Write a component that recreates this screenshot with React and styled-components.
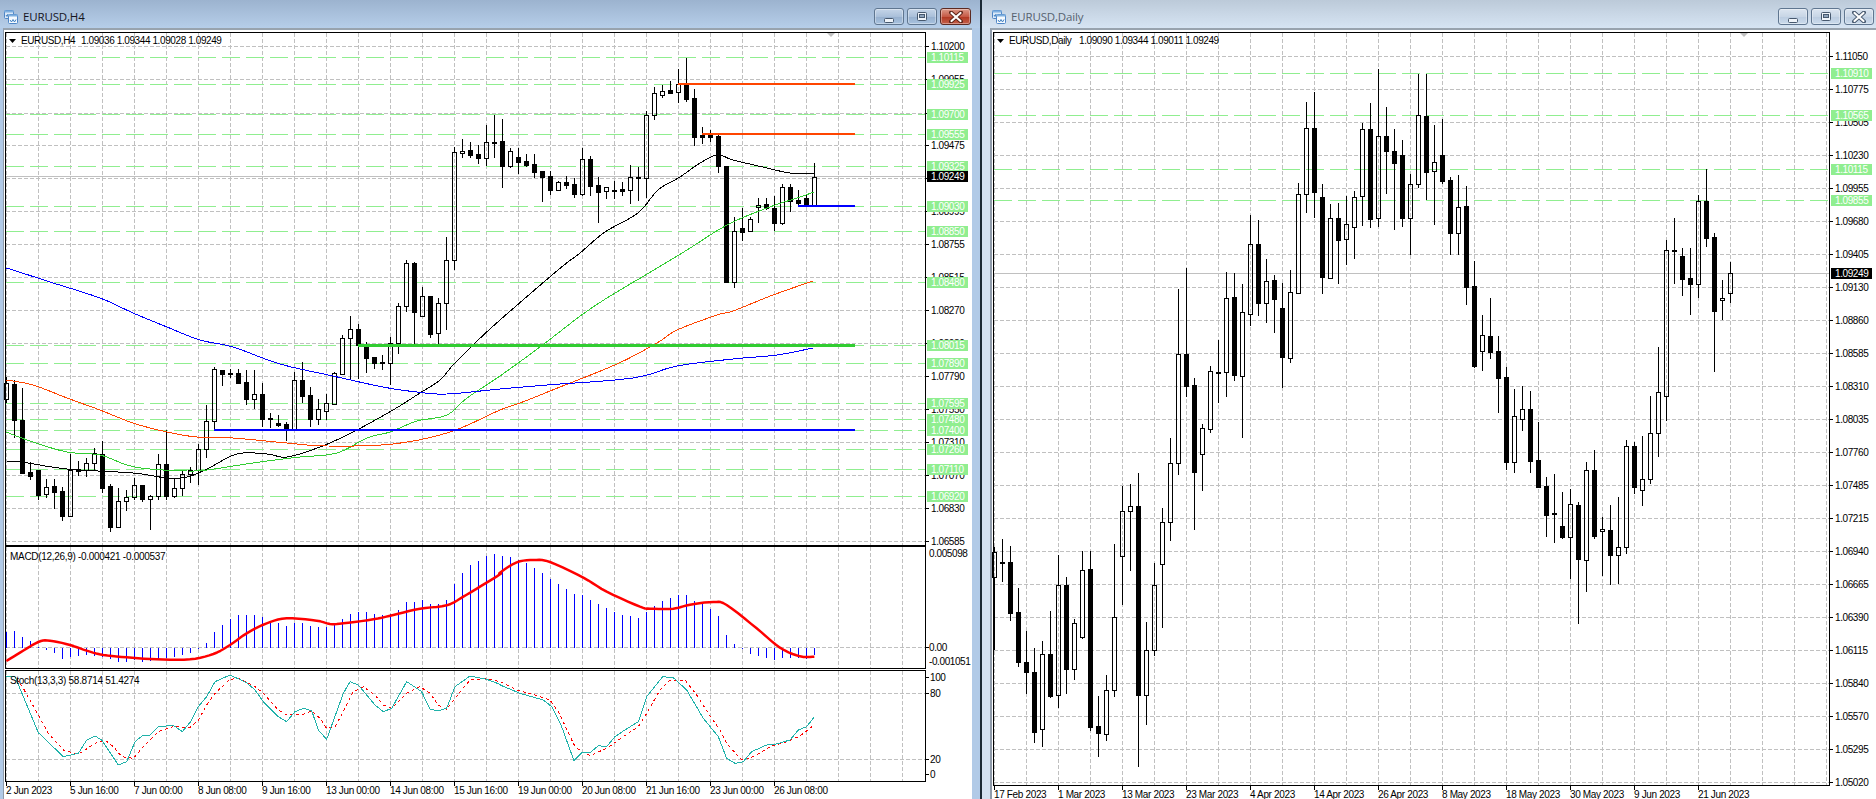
import React from "react";
import styled, { createGlobalStyle } from "styled-components";

const Global = createGlobalStyle`
  html, body { margin: 0; padding: 0; background: #1c2a35; }
  #root { width: 1876px; height: 799px; overflow: hidden; }
`;

/* ---------- data: [high, low, bodyTop, bodyBottom, isWhite] in chart pixels ---------- */
const H4 = [
[377,403,383,399,1],[380,438,384,420,0],[388,473,420,473,0],[462,480,472,476,0],[470,500,470,495,0],[479,498,487,494,1],[479,509,486,492,0],[487,521,491,516,0],[454,516,470,516,1],[461,476,469,471,0],
[458,477,463,470,1],[448,470,453,463,1],[441,493,454,488,0],[484,532,486,527,0],[488,528,501,527,1],[490,511,497,501,1],[478,500,485,497,1],[485,502,485,499,0],[495,530,496,499,1],[454,500,464,496,1],
[430,500,464,496,0],[478,498,488,496,1],[471,496,474,488,1],[467,483,470,474,1],[444,485,449,470,1],[405,458,421,449,1],[367,429,369,421,1],[370,386,370,374,0],[369,378,373,374,0],[369,383,373,383,0],
[370,405,382,399,0],[370,409,394,399,1],[383,427,394,419,0],[413,428,418,419,0],[415,427,423,425,0],[422,441,424,430,0],[372,430,380,430,1],[362,403,380,396,0],[387,427,395,419,0],[399,425,409,419,1],
[394,420,403,411,1],[372,404,373,404,1],[335,375,338,374,1],[316,380,329,338,1],[324,379,329,345,0],[342,373,345,358,0],[357,369,357,363,0],[355,370,362,363,0],[337,385,343,363,1],[303,354,306,343,1],
[260,312,263,306,1],[262,347,263,312,0],[287,317,296,316,1],[296,338,296,334,0],[298,345,303,333,1],[237,330,260,303,1],[147,270,152,260,1],[139,158,151,153,1],[142,158,150,155,0],[145,164,154,158,0],
[125,166,142,158,1],[115,158,142,143,0],[119,188,141,166,0],[148,168,151,166,1],[148,174,157,162,0],[154,167,161,165,0],[154,178,164,172,0],[171,202,171,177,0],[171,195,176,190,0],[181,191,182,190,1],
[176,189,182,185,0],[178,198,184,194,0],[148,196,159,194,1],[156,196,159,186,0],[177,223,185,192,0],[187,199,187,191,1],[181,199,190,191,0],[182,196,189,191,0],[165,204,177,190,1],[167,201,177,178,0],
[111,198,115,178,1],[87,120,93,115,1],[85,98,91,95,1],[81,94,90,93,0],[69,103,84,92,1],[58,102,84,99,0],[89,146,98,137,0],[127,144,135,137,0],[130,142,135,137,0],[135,173,136,166,0],
[166,282,166,282,0],[217,288,231,282,1],[208,241,228,232,0],[217,232,219,231,1],[198,223,205,207,1],[198,210,204,208,0],[196,231,208,223,0],[184,225,187,223,1],[184,212,187,201,0],[190,206,200,203,0],
[195,207,198,206,0],[163,207,177,206,1]];

const D1 = [
[547,650,552,577,1],[539,582,562,563,0],[546,621,562,613,0],[588,667,612,662,0],[631,694,662,672,0],[648,743,672,732,0],[641,747,654,729,1],[611,698,654,696,0],[555,708,585,695,1],[577,694,585,669,0],
[619,680,623,669,1],[551,639,570,637,1],[551,731,569,727,0],[696,757,726,733,0],[675,741,690,734,1],[544,697,617,690,1],[486,605,511,556,1],[484,571,506,511,1],[473,767,506,695,0],[622,725,650,695,1],
[563,656,585,650,1],[508,628,522,564,1],[438,541,463,522,1],[289,475,354,463,1],[268,397,354,386,0],[378,530,385,472,0],[424,491,428,454,1],[366,433,371,429,1],[340,403,372,373,0],[272,397,298,372,1],
[273,381,297,375,0],[284,438,312,376,1],[215,326,244,314,1],[220,316,244,303,0],[259,323,281,303,1],[275,333,280,299,0],[283,388,308,357,0],[270,363,292,358,1],[183,294,194,293,1],[102,213,128,194,1],
[92,218,128,192,0],[184,294,197,277,0],[204,279,218,278,1],[203,284,218,240,0],[196,265,224,239,1],[191,259,197,227,1],[123,226,129,196,1],[103,228,129,219,0],[69,227,136,218,1],[107,194,136,151,0],
[129,230,151,163,0],[140,227,155,218,0],[174,255,184,218,1],[74,188,115,184,1],[74,200,116,172,0],[125,225,162,171,1],[119,184,155,181,0],[177,255,180,233,0],[175,255,207,233,1],[186,305,206,287,0],
[261,368,286,366,0],[315,371,335,351,1],[298,359,336,352,0],[336,413,351,378,0],[367,470,377,462,0],[389,473,416,462,1],[386,431,409,419,1],[391,473,409,461,0],[422,488,460,487,0],[477,537,486,515,0],
[474,543,513,514,0],[492,539,526,537,0],[489,579,504,537,1],[502,624,505,559,0],[462,592,470,560,1],[450,539,470,536,0],[517,576,529,531,1],[505,585,530,555,0],[497,584,547,555,1],[440,554,446,547,1],
[442,494,446,487,0],[436,506,479,490,1],[396,484,433,479,1],[347,457,392,433,1],[240,421,250,396,1],[218,284,250,251,0],[248,296,256,279,0],[248,315,278,284,0],[195,298,201,284,1],[169,247,201,238,0],
[233,372,237,311,0],[280,320,298,300,1],[262,303,273,293,1]];

const MA_BLACK = [[6,461],[22,462],[67,469],[133,473],[167,478],[187,477],[207,469],[237,454],[267,454],[287,457],[320,447],[353,432],[393,410],[420,393],[440,380],[453,365],[473,345],[500,320],[558,270],[580,253],[605,232],[638,213],[658,190],[680,177],[697,165],[717,155],[733,160],[767,168],[790,173],[814,174]];
const MA_GREEN = [[6,432],[33,442],[67,452],[100,455],[127,465],[150,469],[187,471],[207,470],[233,466],[267,461],[300,457],[337,453],[367,438],[390,432],[417,421],[447,415],[467,398],[500,376],[540,347],[593,307],[654,270],[687,250],[727,225],[767,208],[800,197],[814,192]];
const MA_ORANGE = [[6,380],[33,385],[67,398],[100,410],[133,423],[167,432],[197,437],[233,438],[287,443],[327,446],[393,444],[450,432],[500,410],[520,403],[560,387],[617,364],[657,343],[677,330],[717,315],[733,311],[773,295],[813,281]];
const MA_BLUE = [[6,268],[13,270],[50,282],[100,298],[133,313],[167,327],[200,340],[233,347],[280,364],[333,376],[383,387],[417,392],[447,394],[500,389],[547,385],[633,378],[677,366],[733,359],[777,355],[813,348]];

const HIST = [305,303,321,333,350,360,368,387,380,378,375,378,380,388,395,395,390,395,392,388,385,382,376,368,357,339,305,285,267,255,255,255,261,275,278,288,279,279,288,290,291,285,267,252,246,246,252,255,253,240,216,216,210,222,222,210,162,129,105,93,77,73,78,81,90,99,114,129,147,162,177,192,195,210,222,234,246,255,258,264,246,228,213,204,195,195,213,219,237,258,315,342,358,372,378,384,390,384,384,384,387,376];

/* Catmull-Rom resampling, so the averages read as curves rather than as chords */
const smooth = (arr, steps = 5) => {
  const out = [];
  for (let i = 0; i < arr.length - 1; i++) {
    const p0 = arr[Math.max(0, i - 1)];
    const p1 = arr[i];
    const p2 = arr[i + 1];
    const p3 = arr[Math.min(arr.length - 1, i + 2)];
    for (let s = 0; s < steps; s++) {
      const t = s / steps;
      const f = k =>
        0.5 *
        (2 * p1[k] +
          (p2[k] - p0[k]) * t +
          (2 * p0[k] - 5 * p1[k] + 4 * p2[k] - p3[k]) * t * t +
          (3 * p1[k] - p0[k] - 3 * p2[k] + p3[k]) * t * t * t);
      out.push([+f(0).toFixed(2), +f(1).toFixed(2)]);
    }
  }
  out.push(arr[arr.length - 1]);
  return out;
};

const fromZoom = (left, right) => [
  ...left.map(([x, y]) => [x / 3, 530 + y / 3]),
  ...right.map(([x, y]) => [500 + x / 3, 530 + y / 3]),
];
const MACD_SIGNAL = fromZoom(
  [[19,393],[60,368],[115,336],[150,332],[210,345],[260,362],[310,375],[380,382],[470,388],[570,388],[640,372],[690,345],[740,310],[800,280],[860,265],[950,272],[990,282],[1030,280],[1120,268],[1180,255],[1260,236],[1340,226],[1390,200],[1440,170],[1500,133]],
  [[0,128],[50,97],[100,90],[150,96],[250,143],[320,185],[420,230],[450,236],[520,236],[570,224],[640,216],[680,225],[770,295],[840,353],[900,379],[943,380]]
);
const STOCH_MAIN = fromZoom(
  [[19,440],[45,440],[115,608],[190,680],[235,670],[260,630],[285,618],[305,630],[355,705],[380,695],[405,635],[430,615],[450,615],[475,590],[520,586],[547,605],[572,575],[595,530],[620,500],[645,455],[690,435],[740,458],[765,480],[790,515],[835,560],[860,575],[885,545],[910,535],[935,542],[955,600],[980,628],[1030,490],[1050,455],[1075,465],[1125,525],[1150,545],[1175,535],[1220,455],[1265,485],[1290,538],[1315,542],[1340,535],[1365,470],[1410,438],[1460,448],[1500,463]],
  [[0,465],[60,490],[130,510],[155,530],[185,590],[222,692],[245,668],[270,668],[295,647],[320,650],[345,620],[370,603],[415,575],[440,500],[488,440],[520,443],[560,480],[610,565],[655,620],[680,685],[705,700],[730,695],[755,665],[800,645],[825,643],[870,630],[895,600],[920,590],[942,562]]
);
const STOCH_SIGNAL = fromZoom(
  [[19,440],[45,440],[67,470],[115,555],[145,610],[190,660],[235,673],[285,640],[315,630],[340,650],[365,680],[400,685],[430,650],[475,605],[520,590],[570,592],[595,570],[620,525],[645,490],[690,448],[715,445],[765,470],[790,490],[835,540],[860,555],[910,553],[935,542],[960,565],[980,595],[1005,590],[1030,545],[1060,485],[1090,470],[1125,495],[1150,525],[1175,535],[1220,490],[1260,470],[1290,490],[1315,525],[1340,538],[1365,505],[1410,450],[1460,445],[1500,455]],
  [[0,455],[50,480],[105,495],[150,510],[175,545],[225,650],[245,665],[270,677],[320,655],[370,620],[415,590],[440,550],[480,480],[510,450],[555,450],[590,495],[625,550],[660,600],[680,640],[725,690],[760,680],[810,650],[860,635],[900,618],[942,585]]
);

const H4_TICKS = [["1.10200",46],["1.09955",79],["1.09700",113],["1.09475",145],["1.09235",178],["1.08995",211],["1.08755",244],["1.08515",277],["1.08270",310],["1.08030",343],["1.07790",376],["1.07550",409],["1.07310",442],["1.07070",475],["1.06830",508],["1.06585",541]];
const H4_LEVELS = [["1.10115",57],["1.09925",84],["1.09700",114],["1.09555",134],["1.09325",166],["1.09030",206],["1.08850",231],["1.08480",282],["1.08015",345],["1.07890",363],["1.07595",403],["1.07480",419],["1.07400",430],["1.07260",449],["1.07110",469],["1.06920",496]];
const D1_TICKS = [["1.11050",56],["1.10775",89],["1.10505",122],["1.10230",155],["1.09955",188],["1.09680",221],["1.09405",254],["1.09130",287],["1.08860",320],["1.08585",353],["1.08310",386],["1.08035",419],["1.07760",452],["1.07485",485],["1.07215",518],["1.06940",551],["1.06665",584],["1.06390",617],["1.06115",650],["1.05840",683],["1.05570",716],["1.05295",749],["1.05020",782]];
const D1_LEVELS = [["1.10910",73],["1.10565",115],["1.10115",169],["1.09855",200]];

const H4_DATES = ["2 Jun 2023","5 Jun 16:00","7 Jun 00:00","8 Jun 08:00","9 Jun 16:00","13 Jun 00:00","14 Jun 08:00","15 Jun 16:00","19 Jun 00:00","20 Jun 08:00","21 Jun 16:00","23 Jun 00:00","26 Jun 08:00"];
const D1_DATES = ["17 Feb 2023","1 Mar 2023","13 Mar 2023","23 Mar 2023","4 Apr 2023","14 Apr 2023","26 Apr 2023","8 May 2023","18 May 2023","30 May 2023","9 Jun 2023","21 Jun 2023"];

/* ---------- window chrome ---------- */
const Page = styled.div`
  display: flex;
  gap: 2px;
  width: 1876px;
  height: 799px;
  background: #1c2a35;
`;
const Window = styled.section`
  display: flex;
  flex-direction: column;
  flex: ${p => (p.$active ? "0 0 980px" : "1 1 0")};
  min-width: 0;
  background: ${p => (p.$active ? "#b1cae7" : "#d4e2f1")};
`;
const TitleBar = styled.header`
  box-sizing: border-box;
  display: flex;
  align-items: center;
  flex: 0 0 28px;
  gap: 5px;
  padding: 5px ${p => (p.$active ? "9px" : "2px")} 0 ${p => (p.$active ? "4px" : "10px")};
  background: ${p =>
    p.$active ? "linear-gradient(#9cb3cf, #b6cee9)" : "linear-gradient(#bccad9, #d6e4f3)"};
`;
const Title = styled.span`
  flex: 1;
  font: 11.5px "Open Sans", "Liberation Sans", sans-serif;
  letter-spacing: -0.15px;
  color: ${p => (p.$active ? "#15151f" : "#56626f")};
`;
const ButtonRow = styled.div`
  display: flex;
  gap: 3px;
`;
const CaptionButton = styled.button`
  display: flex;
  align-items: center;
  justify-content: center;
  padding: 0;
  width: ${p => (p.$close && p.$active ? "31px" : "30px")};
  height: 17px;
  border-radius: 3px;
  border: 1px solid ${p => (p.$close && p.$active ? "#5c2a22" : "#5f7690")};
  box-shadow: inset 0 0 0 1px rgba(255, 255, 255, 0.35);
  background: ${p =>
    p.$close && p.$active
      ? "linear-gradient(#dc9a8a, #c65a46 50%, #b23a24 55%, #c4604a)"
      : p.$active
      ? "linear-gradient(#c5d5e8, #aac0da 50%, #98b1cf 55%, #a8c2df)"
      : "linear-gradient(#dbe5f0, #c8d6e6 50%, #bccde1 55%, #cbdbec)"};
`;
const Frame = styled.div`
  flex: 1;
  min-height: 0;
  display: flex;
  padding: 0 ${p => (p.$active ? "8px" : "0")} 0 ${p => (p.$active ? "3px" : "8px")};
`;
const ClientArea = styled.div`
  flex: 1;
  min-width: 0;
  background: #fff;
  border-top: 2px solid #98a3ae;
  border-left: ${p => (p.$active ? "1px" : "2px")} solid #8f9baa;
  padding: 2px 0 0 1px;
`;
const Pane = styled.div`
  box-sizing: border-box;
  width: ${p => p.$width}px;
  height: ${p => p.$height}px;
  margin-top: ${p => p.$gap || 0}px;
  border: 1px solid #000;
  background: #fff;
`;
const PaneSvg = styled.svg`
  display: block;
  overflow: visible;
`;
const TimeAxis = styled.div`
  display: flex;
  margin-left: 1px;
`;
const TimeLabel = styled.span`
  position: relative;
  flex: 0 0 64px;
  box-sizing: border-box;
  height: 17px;
  white-space: nowrap;
  font: 10px/17px "Liberation Sans", sans-serif;
  letter-spacing: -0.35px;
  color: #000;
  &::before {
    content: "";
    position: absolute;
    left: 0;
    top: 0;
    width: 1px;
    height: 4px;
    background: #000;
  }
`;

/* ---------- chart parts ---------- */
const GridLine = styled.line`
  stroke: #c0c0c0;
  stroke-width: 1;
  stroke-dasharray: 4 2;
  shape-rendering: crispEdges;
`;
const LevelLine = styled.line`
  stroke: #90ee90;
  stroke-width: 1;
  stroke-dasharray: 18 6;
  shape-rendering: crispEdges;
`;
const PriceLine = styled.line`
  stroke: #c0c0c0;
  stroke-width: 1;
  shape-rendering: crispEdges;
`;
const ObjectLine = styled.line`
  stroke: ${p => p.$color};
  stroke-width: ${p => p.$w};
  shape-rendering: crispEdges;
`;
const Tick = styled.line`
  stroke: #000;
  stroke-width: 1;
  shape-rendering: crispEdges;
`;
const Wick = styled.line`
  stroke: #000;
  stroke-width: 1;
  shape-rendering: crispEdges;
`;
const Body = styled.rect`
  stroke: #000;
  stroke-width: 1;
  fill: ${p => (p.$white ? "none" : "#000")};
  shape-rendering: crispEdges;
`;
const Trace = styled.polyline`
  fill: none;
  stroke: ${p => p.$color};
  stroke-width: ${p => p.$w || 1};
  stroke-dasharray: ${p => p.$dash || "none"};
  stroke-linejoin: round;
  shape-rendering: ${p => (p.$soft ? "auto" : "crispEdges")};
`;
const HistBar = styled.line`
  stroke: #0000ff;
  stroke-width: 1;
  shape-rendering: crispEdges;
`;
const ChartText = styled.text`
  font: 10px "Liberation Sans", sans-serif;
  letter-spacing: -0.4px;
  fill: #000;
`;
const HeadText = styled.text`
  font: 10px "Liberation Sans", sans-serif;
  letter-spacing: -0.4px;
  fill: #000;
`;
const IndicatorText = styled.text`
  font: 10px "Liberation Sans", sans-serif;
  letter-spacing: -0.3px;
  fill: #000;
`;
const TagBox = styled.rect`
  fill: ${p => (p.$dark ? "#000" : "#90ee90")};
`;
const TagText = styled.text`
  font: 10px "Liberation Sans", sans-serif;
  letter-spacing: -0.4px;
  fill: #fff;
`;
const Marker = styled.polygon`
  fill: ${p => p.$fill};
`;

const toPoints = arr => arr.map(([x, y]) => `${x},${y}`).join(" ");
const range = (start, step, end) => {
  const out = [];
  for (let v = start; v <= end; v += step) out.push(v);
  return out;
};

const VGrid = ({ xs, top, bottom }) =>
  xs.map(x => <GridLine key={x} x1={x + 0.5} x2={x + 0.5} y1={top} y2={bottom} />);

const HGrid = ({ x1, x2, ys }) =>
  ys.map(y => <GridLine key={y} x1={x1} x2={x2} y1={y + 0.5} y2={y + 0.5} />);

const Levels = ({ x1, x2, list }) =>
  list.map(([l, y]) => <LevelLine key={l} x1={x1} x2={x2} y1={y + 0.5} y2={y + 0.5} />);

const Candles = ({ data, x0 }) =>
  data.map(([h, l, t, b, w], i) => {
    const x = x0 + i * 8 + 0.5;
    return (
      <g key={i}>
        <Wick x1={x} x2={x} y1={h} y2={t + 0.5} />
        <Wick x1={x} x2={x} y1={b + 0.5} y2={l} />
        <Body $white={!!w} x={x - 2} y={t + 0.5} width={4} height={Math.max(1, b - t)} />
      </g>
    );
  });

const AxisLabels = ({ x, axisX, list }) =>
  list.map(([l, y]) => (
    <g key={l}>
      <Tick x1={axisX} x2={axisX + 3} y1={y + 0.5} y2={y + 0.5} />
      <ChartText x={x} y={y + 4}>{l}</ChartText>
    </g>
  ));

const Tags = ({ x, list, dark }) =>
  list.map(([l, y]) => (
    <g key={l}>
      <TagBox $dark={dark} x={x} y={y - 5} width={41} height={11} />
      <TagText x={x + 4} y={y + 4}>{l}</TagText>
    </g>
  ));

const ChartHead = ({ triX, nameX, valueX, name, values, shiftX }) => (
  <>
    <Marker $fill="#000" points={`${triX},39 ${triX + 7},39 ${triX + 3.5},43`} />
    <HeadText x={nameX} y={44}>{name}</HeadText>
    <HeadText x={valueX} y={44}>{values}</HeadText>
    <Marker $fill="#c0c0c0" points={`${shiftX - 4},33 ${shiftX + 4},33 ${shiftX},37`} />
  </>
);

const WindowIcon = () => (
  <svg width="14" height="14" viewBox="0 0 14 14" aria-hidden="true">
    <rect x="0.5" y="0.5" width="9" height="8" rx="1" fill="#dbe9f8" stroke="#4f86c6" />
    <rect x="0.5" y="0.5" width="9" height="2" fill="#7fb0e0" />
    <rect x="4.5" y="4.5" width="9" height="9" rx="1" fill="#f5faff" stroke="#4f86c6" />
    <rect x="4.5" y="4.5" width="9" height="2" fill="#7fb0e0" />
    <path d="M6 10l1.5 2L9 9.5l1.5 2.5L12 9.5" fill="none" stroke="#3f7fc0" strokeWidth="1" />
    <path d="M2 5l1 1.5L4 4" fill="none" stroke="#3f7fc0" strokeWidth="1" />
  </svg>
);

const MinGlyph = () => (
  <svg width="12" height="14" viewBox="0 0 12 14" aria-hidden="true">
    <rect x="1.5" y="8.5" width="9" height="4" rx="1" fill="#eef3f9" stroke="#46586e" />
  </svg>
);
const RestoreGlyph = () => (
  <svg width="12" height="14" viewBox="0 0 12 14" aria-hidden="true">
    <rect x="1.5" y="2.5" width="9" height="8" rx="1" fill="#eef3f9" stroke="#46586e" />
    <rect x="3.5" y="4.5" width="5" height="3" fill="#8ea3bb" stroke="#46586e" />
  </svg>
);
const CloseGlyph = ({ active }) => (
  <svg width="14" height="12" viewBox="0 0 14 12" aria-hidden="true">
    <path d="M2 1.5L12 10.5M12 1.5L2 10.5" stroke={active ? "#5d2418" : "#46586e"} strokeWidth="4" strokeLinecap="round" />
    <path d="M2.5 2L11.5 10M11.5 2L2.5 10" stroke="#fff" strokeWidth="2.2" strokeLinecap="round" />
  </svg>
);

const Caption = ({ active, title }) => (
  <TitleBar $active={active}>
    <WindowIcon />
    <Title $active={active}>{title}</Title>
    <ButtonRow>
      <CaptionButton $active={active}><MinGlyph /></CaptionButton>
      <CaptionButton $active={active}><RestoreGlyph /></CaptionButton>
      <CaptionButton $active={active} $close><CloseGlyph active={active} /></CaptionButton>
    </ButtonRow>
  </TitleBar>
);

/* ---------- left chart ---------- */
const H4_X = range(6, 32, 902);

const H4Chart = () => (
  <>
    <Pane $width={921} $height={514}>
      <PaneSvg width="966" height="512" viewBox="6 33 966 512">
        <VGrid xs={H4_X} top={33} bottom={545} />
        <HGrid x1={6} x2={925} ys={H4_TICKS.map(t => t[1])} />
        <Levels x1={6} x2={925} list={H4_LEVELS} />
        <PriceLine x1={6} x2={925} y1={176.5} y2={176.5} />
        <Candles data={H4} x0={6} />
        <Trace $color="#000" points={toPoints(smooth(MA_BLACK))} />
        <Trace $color="#32cd32" points={toPoints(smooth(MA_GREEN))} />
        <Trace $color="#ff4500" points={toPoints(smooth(MA_ORANGE))} />
        <Trace $color="#0000ff" points={toPoints(smooth(MA_BLUE))} />
        <ObjectLine $color="#ff4500" $w={2} x1={678} x2={855} y1={84} y2={84} />
        <ObjectLine $color="#ff4500" $w={2} x1={702} x2={855} y1={134} y2={134} />
        <ObjectLine $color="#0000ff" $w={2} x1={798} x2={855} y1={206} y2={206} />
        <ObjectLine $color="#0000ff" $w={2} x1={214} x2={855} y1={430} y2={430} />
        <ObjectLine $color="#32cd32" $w={3} x1={358} x2={855} y1={345.5} y2={345.5} />
        <AxisLabels x={931} axisX={926} list={H4_TICKS} />
        <Tags x={927} list={H4_LEVELS} />
        <Tags x={927} list={[["1.09249", 176]]} dark />
        <ChartHead triX={9} nameX={21} valueX={81} name="EURUSD,H4" values="1.09036 1.09344 1.09028 1.09249" shiftX={831} />
      </PaneSvg>
    </Pane>
    <Pane $width={921} $height={123}>
      <PaneSvg width="966" height="121" viewBox="6 547 966 121">
        <VGrid xs={H4_X} top={547} bottom={668} />
        <HGrid x1={6} x2={925} ys={[647]} />
        {HIST.map((z, i) => (
          <HistBar key={i} x1={6.5 + i * 8} x2={6.5 + i * 8} y1={647.5} y2={530 + z / 3} />
        ))}
        <Trace $soft $color="#ff0000" $w={2.5} points={toPoints(smooth(MACD_SIGNAL))} />
        <IndicatorText x={10} y={560}>MACD(12,26,9) -0.000421 -0.000537</IndicatorText>
        <Tick x1={926} x2={929} y1={647.5} y2={647.5} />
        <ChartText x={929} y={557}>0.005098</ChartText>
        <ChartText x={929} y={651}>0.00</ChartText>
        <ChartText x={929} y={665}>-0.001051</ChartText>
      </PaneSvg>
    </Pane>
    <Pane $width={921} $height={112} $gap={1}>
      <PaneSvg width="966" height="110" viewBox="6 671 966 110">
        <VGrid xs={H4_X} top={671} bottom={781} />
        <HGrid x1={6} x2={925} ys={[693, 759]} />
        <Trace $color="#ff0000" $dash="3 3" points={toPoints(STOCH_SIGNAL)} />
        <Trace $color="#20b2aa" points={toPoints(STOCH_MAIN)} />
        <IndicatorText x={10} y={684}>Stoch(13,3,3) 58.8714 51.4274</IndicatorText>
        {[["100", 677], ["80", 693], ["20", 759], ["0", 774]].map(([l, y]) => (
          <g key={l}>
            <Tick x1={926} x2={929} y1={y + 0.5} y2={y + 0.5} />
            <ChartText x={930} y={y + 4}>{l}</ChartText>
          </g>
        ))}
      </PaneSvg>
    </Pane>
    <TimeAxis>
      {H4_DATES.map(d => <TimeLabel key={d}>{d}</TimeLabel>)}
    </TimeAxis>
  </>
);

/* ---------- right chart ---------- */
const D1Chart = () => (
  <>
    <Pane $width={837} $height={754}>
      <PaneSvg width="881" height="752" viewBox="994 33 881 752">
        <VGrid xs={range(994, 32, 1826)} top={33} bottom={785} />
        <HGrid x1={994} x2={1829} ys={D1_TICKS.map(t => t[1])} />
        <Levels x1={994} x2={1829} list={D1_LEVELS} />
        <PriceLine x1={994} x2={1829} y1={273.5} y2={273.5} />
        <Candles data={D1} x0={994} />
        <AxisLabels x={1835} axisX={1830} list={D1_TICKS} />
        <Tags x={1831} list={D1_LEVELS} />
        <Tags x={1831} list={[["1.09249", 273]]} dark />
        <ChartHead triX={997} nameX={1009} valueX={1079} name="EURUSD,Daily" values="1.09090 1.09344 1.09011 1.09249" shiftX={1744} />
      </PaneSvg>
    </Pane>
    <TimeAxis>
      {D1_DATES.map(d => <TimeLabel key={d}>{d}</TimeLabel>)}
    </TimeAxis>
  </>
);

export default function App() {
  return (
    <>
      <Global />
      <Page>
        <Window $active>
          <Caption active title="EURUSD,H4" />
          <Frame $active>
            <ClientArea $active>
              <H4Chart />
            </ClientArea>
          </Frame>
        </Window>
        <Window>
          <Caption title="EURUSD,Daily" />
          <Frame>
            <ClientArea>
              <D1Chart />
            </ClientArea>
          </Frame>
        </Window>
      </Page>
    </>
  );
}
